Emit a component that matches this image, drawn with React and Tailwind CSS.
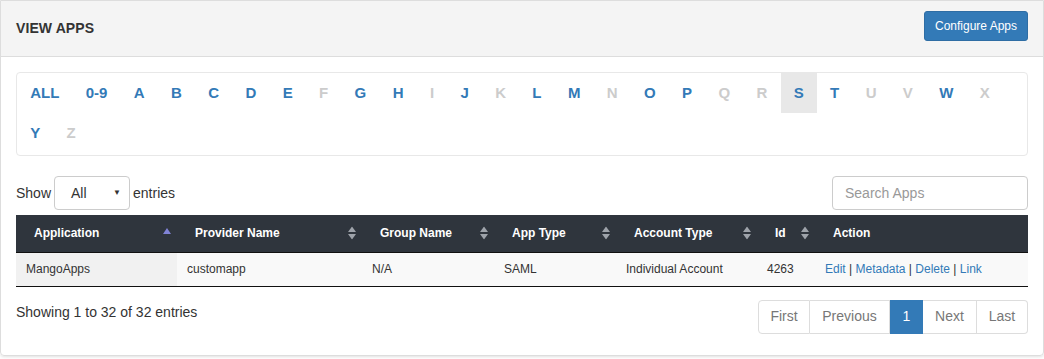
import React from "react";

const letters = [
  ["ALL", true], ["0-9", true], ["A", true], ["B", true], ["C", true], ["D", true], ["E", true],
  ["F", false], ["G", true], ["H", true], ["I", false], ["J", true], ["K", false], ["L", true],
  ["M", true], ["N", false], ["O", true], ["P", true], ["Q", false], ["R", false], ["S", true, true],
  ["T", true], ["U", false], ["V", false], ["W", true], ["X", false], ["Y", true], ["Z", false],
];

function SortBoth() {
  return (
    <svg width="8" height="13" viewBox="0 0 8 13" className="absolute right-[6px] top-1/2 -translate-y-1/2">
      <path d="M4 0 L8 5.5 L0 5.5 Z" fill="#9ea3aa" />
      <path d="M4 13 L8 7.5 L0 7.5 Z" fill="#9ea3aa" />
    </svg>
  );
}

function SortAsc() {
  return (
    <svg width="8" height="6" viewBox="0 0 8 6" className="absolute right-[6px] top-[13px]">
      <path d="M4 0 L8 6 L0 6 Z" fill="#8083d6" />
    </svg>
  );
}

const cols = [
  { name: "Application", w: "w-[161px]", sort: "asc" },
  { name: "Provider Name", w: "w-[185px]", sort: "both" },
  { name: "Group Name", w: "w-[132px]", sort: "both" },
  { name: "App Type", w: "w-[122px]", sort: "both" },
  { name: "Account Type", w: "w-[141px]", sort: "both" },
  { name: "Id", w: "w-[58px]", sort: "both" },
  { name: "Action", w: "", sort: null },
];

export default function App() {
  return (
    <div className="w-[1044px] h-[359px] bg-white" style={{ fontFamily: '"Liberation Sans", Arial, sans-serif' }}>
      <div className="w-[1044px] border border-[#dddddd] rounded-b-[4px] shadow-[0_1px_3px_rgba(0,0,0,0.12)] text-[#333333]">
        <div className="h-[56px] bg-[#f4f4f4] border-b border-[#dddddd] flex justify-between items-start px-[15px]">
          <div className="h-[55px] flex items-center text-[14px] font-bold text-[#333] tracking-[0.1px]">VIEW APPS</div>
          <button className="mt-[10px] w-[104px] h-[30px] flex items-center justify-center bg-[#337ab7] border border-[#2e6da4] rounded-[3px] text-white text-[12px]">
            Configure Apps
          </button>
        </div>
        <div className="px-[15px] pt-[15px] pb-[21px]">
          <div className="border border-[#e8e8e8] rounded-[4px] flex flex-wrap pb-[2px] pr-[10px]">
            {letters.map(([l, on, active]) => (
              <div
                key={l}
                className={
                  "h-[40px] px-[13.2px] flex items-center text-[15px] font-bold " +
                  (on ? "text-[#337ab7] " : "text-[#cccccc] ") +
                  (active ? "bg-[#e8e8e8]" : "")
                }
              >
                {l}
              </div>
            ))}
          </div>

          <div className="mt-[20px] flex justify-between items-center h-[34px]">
            <div className="flex items-center text-[14px] text-[#333]">
              <span>Show</span>
              <div className="ml-[3px] mr-[3px] w-[76px] h-[34px] border border-[#cccccc] rounded-[4px] flex items-center justify-between pl-[16px] pr-[8px]">
                <span>All</span>
                <span className="text-[8px] text-[#333]">▼</span>
              </div>
              <span>entries</span>
            </div>
            <div className="w-[196px] h-[34px] border border-[#cccccc] rounded-[4px] flex items-center px-[12px] text-[14px] text-[#999999]">
              Search Apps
            </div>
          </div>

          <table className="mt-[5px] w-full table-fixed border-collapse">
            <thead>
              <tr className="bg-[#2f353d]">
                {cols.map((c) => (
                  <th
                    key={c.name}
                    className={c.w + " relative h-[37px] pl-[18px] text-left text-[12px] font-bold text-white border-b border-[#111111]"}
                  >
                    {c.name}
                    {c.sort === "asc" && <SortAsc />}
                    {c.sort === "both" && <SortBoth />}
                  </th>
                ))}
              </tr>
            </thead>
            <tbody>
              <tr className="bg-[#f9f9f9] text-[12px] text-[#333]">
                <td className="h-[34px] pl-[10px] bg-[#f1f1f1] border-b border-[#111111]">MangoApps</td>
                <td className="pl-[10px] border-b border-[#111111]">customapp</td>
                <td className="pl-[10px] border-b border-[#111111]">N/A</td>
                <td className="pl-[10px] border-b border-[#111111]">SAML</td>
                <td className="pl-[10px] border-b border-[#111111]">Individual Account</td>
                <td className="pl-[10px] border-b border-[#111111]">4263</td>
                <td className="pl-[10px] border-b border-[#111111]">
                  <span className="text-[#337ab7]">Edit</span> | <span className="text-[#337ab7]">Metadata</span> |{" "}
                  <span className="text-[#337ab7]">Delete</span> | <span className="text-[#337ab7]">Link</span>
                </td>
              </tr>
            </tbody>
          </table>

          <div className="mt-[13px] flex justify-between items-start">
            <div className="pt-[2px] leading-[20px] text-[14px] text-[#333]">Showing 1 to 32 of 32 entries</div>
            <div className="flex h-[34px] text-[14px]">
              <div className="w-[52px] flex items-center justify-center border border-[#dddddd] rounded-l-[4px] text-[#777777]">First</div>
              <div className="w-[80px] flex items-center justify-center border border-l-0 border-[#dddddd] text-[#777777]">Previous</div>
              <div className="w-[33px] flex items-center justify-center bg-[#337ab7] border border-[#337ab7] text-white">1</div>
              <div className="w-[54px] flex items-center justify-center border border-l-0 border-[#dddddd] text-[#777777]">Next</div>
              <div className="w-[51px] flex items-center justify-center border border-l-0 border-[#dddddd] rounded-r-[4px] text-[#777777]">Last</div>
            </div>
          </div>
        </div>
      </div>
    </div>
  );
}
